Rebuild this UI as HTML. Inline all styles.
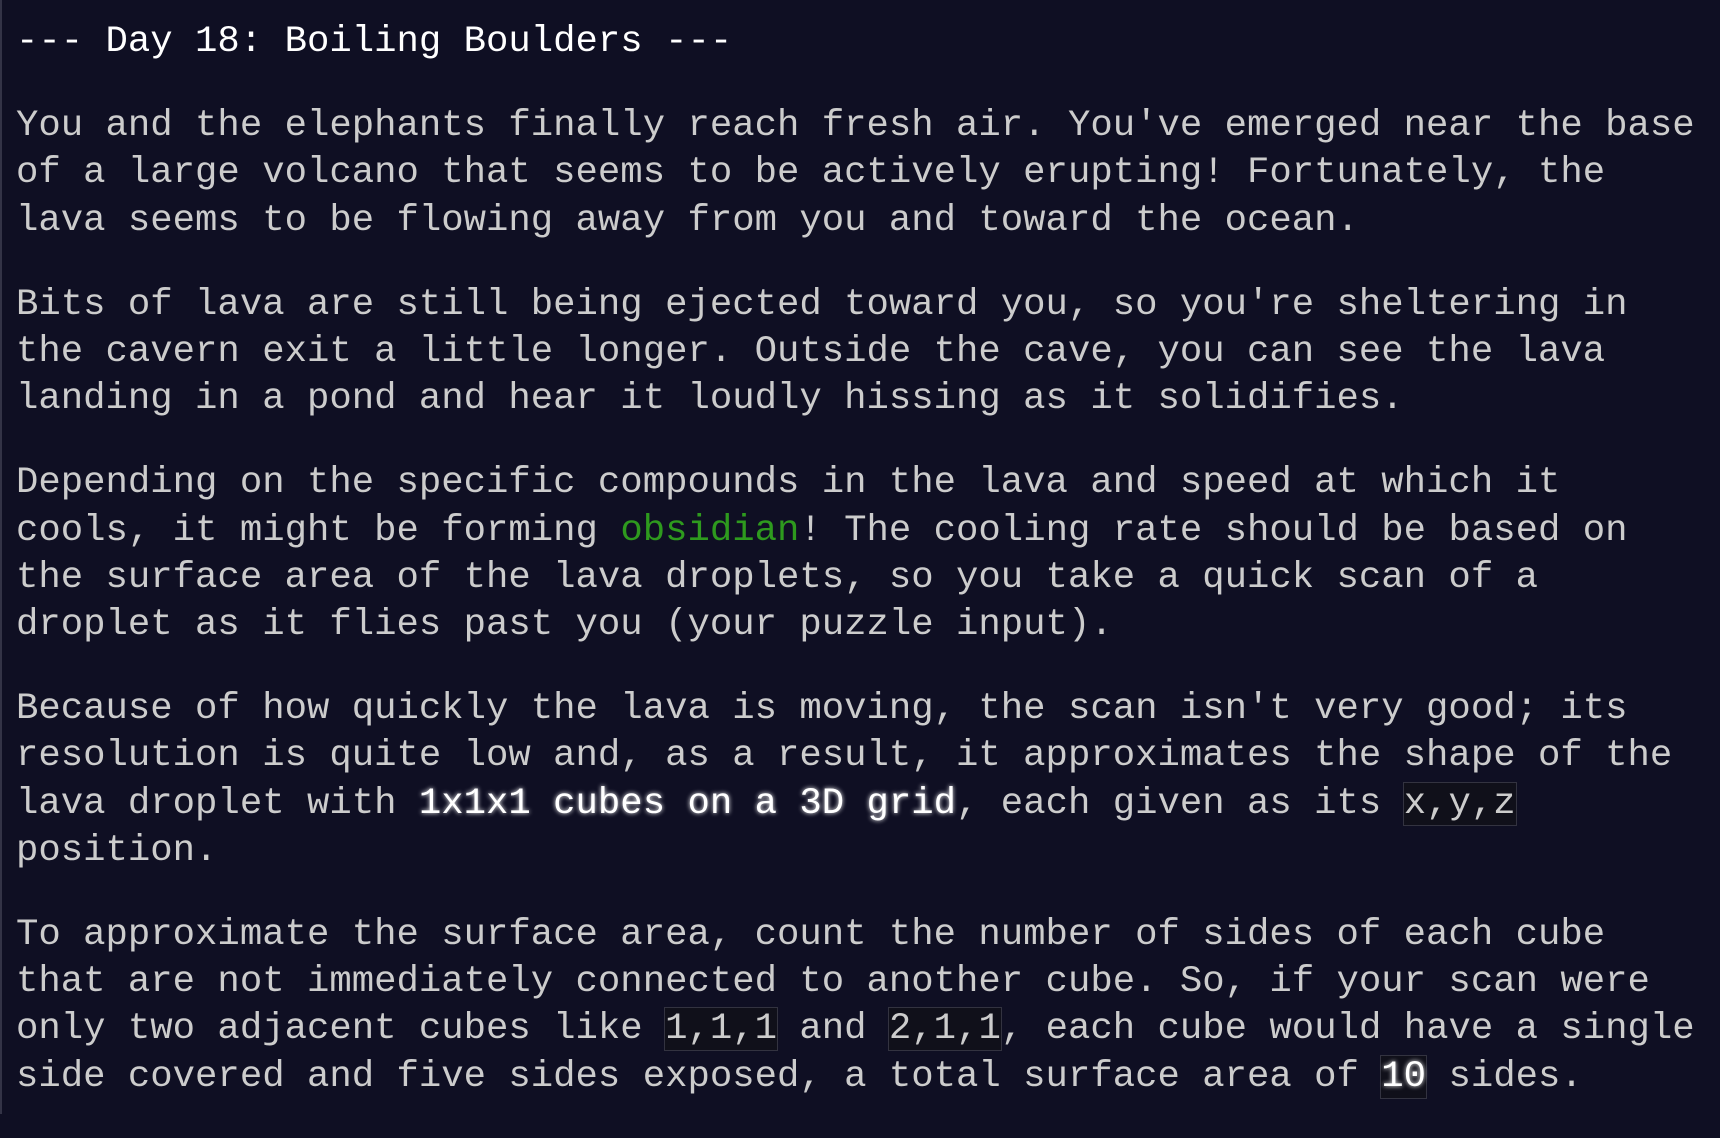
<!DOCTYPE html>
<html><head><meta charset="utf-8"><style>
html,body{margin:0;padding:0;background:#0f0f23;width:1720px;height:1114px;overflow:hidden;}
body{border-left:2px solid #333346;box-sizing:border-box;}
.w{position:absolute;left:16px;top:19px;font-family:"Liberation Mono",monospace;font-size:37.3px;line-height:47.2px;color:#cccccc;white-space:pre;}
h2{font-size:inherit;font-weight:normal;color:#fff;margin:0 0 37px 0;}
p{margin:0 0 37px 0;}
.g{color:#2e9a1e;}
em{font-style:normal;font-weight:normal;color:#fff;text-shadow:0 0 5px #fff;}
code{font-family:inherit;background:#10101a;border:1px solid #333340;margin:0 -1px;}
code em{text-shadow:0 0 5px #fff;}
</style></head><body><div class="w"><h2>--- Day 18: Boiling Boulders ---</h2><p>You and the elephants finally reach fresh air. You've emerged near the base
of a large volcano that seems to be actively erupting! Fortunately, the
lava seems to be flowing away from you and toward the ocean.</p><p>Bits of lava are still being ejected toward you, so you're sheltering in
the cavern exit a little longer. Outside the cave, you can see the lava
landing in a pond and hear it loudly hissing as it solidifies.</p><p>Depending on the specific compounds in the lava and speed at which it
cools, it might be forming <span class="g">obsidian</span>! The cooling rate should be based on
the surface area of the lava droplets, so you take a quick scan of a
droplet as it flies past you (your puzzle input).</p><p>Because of how quickly the lava is moving, the scan isn't very good; its
resolution is quite low and, as a result, it approximates the shape of the
lava droplet with <em>1x1x1 cubes on a 3D grid</em>, each given as its <code>x,y,z</code>
position.</p><p>To approximate the surface area, count the number of sides of each cube
that are not immediately connected to another cube. So, if your scan were
only two adjacent cubes like <code>1,1,1</code> and <code>2,1,1</code>, each cube would have a single
side covered and five sides exposed, a total surface area of <code><em>10</em></code> sides.</p></div></body></html>
